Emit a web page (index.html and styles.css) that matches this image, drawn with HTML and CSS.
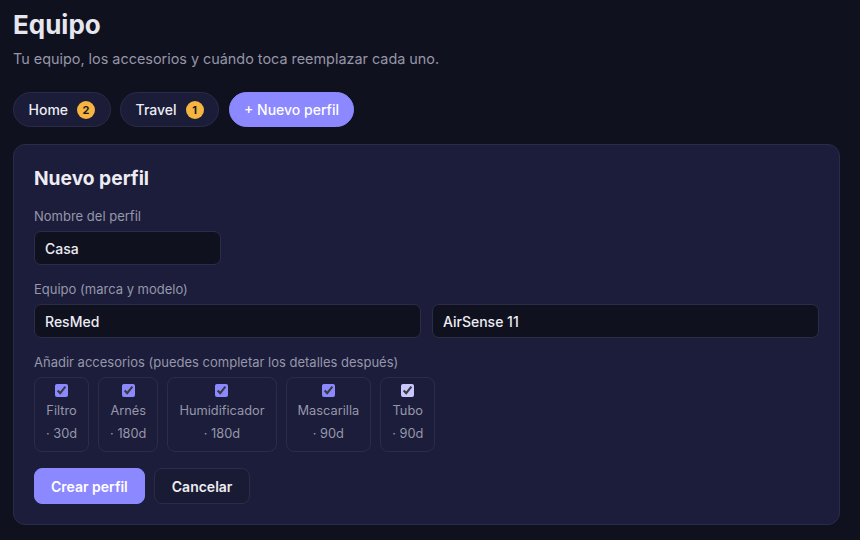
FILE: index.html
```html
<!doctype html>
<html lang="es">
  <head>
    <meta charset="UTF-8" />
    <meta name="viewport" content="width=device-width, initial-scale=1.0" />
    <title>Equipo</title>
    <link rel="stylesheet" href="styles.css">
  </head>
  <body>
    <main class="page">
      <h1 class="title">Equipo</h1>
      <p class="subtitle">Tu equipo, los accesorios y cuándo toca reemplazar cada uno.</p>

      <div class="tabs">
        <button class="tab">Home <span class="badge">2</span></button>
        <button class="tab">Travel <span class="badge">1</span></button>
        <button class="tab tab-new">+ Nuevo perfil</button>
      </div>

      <section class="card">
        <h2 class="card-title">Nuevo perfil</h2>

        <div class="field">
          <label class="label">Nombre del perfil</label>
          <input class="input input-name" type="text" value="Casa" />
        </div>

        <div class="field">
          <label class="label">Equipo (marca y modelo)</label>
          <div class="row">
            <input class="input" type="text" value="ResMed" />
            <input class="input" type="text" value="AirSense 11" />
          </div>
        </div>

        <div class="field">
          <label class="label">Añadir accesorios (puedes completar los detalles después)</label>
          <div class="chips">
            <label class="chip"><input type="checkbox" checked /><span>Filtro</span><span>· 30d</span></label>
            <label class="chip"><input type="checkbox" checked /><span>Arnés</span><span>· 180d</span></label>
            <label class="chip"><input type="checkbox" checked /><span>Humidificador</span><span>· 180d</span></label>
            <label class="chip"><input type="checkbox" checked /><span>Mascarilla</span><span>· 90d</span></label>
            <label class="chip chip-hover"><input type="checkbox" checked /><span>Tubo</span><span>· 90d</span></label>
          </div>
        </div>

        <div class="actions">
          <button class="btn btn-primary">Crear perfil</button>
          <button class="btn btn-ghost">Cancelar</button>
        </div>
      </section>
    </main>
  </body>
</html>
```

FILE: styles.css
```css
html,
body {
  margin: 0;
  background: #10111f;
}

body {
  font-family: Inter, "Noto Sans", sans-serif;
  color: #e8e8f0;
}

.page {
  padding: 9px 20px 16px 13px;
}

.title {
  margin: 0;
  font-size: 26px;
  line-height: 32px;
  font-weight: 700;
  color: #e6e6ee;
}

.subtitle {
  margin: 8px 0 0;
  font-size: 14.4px;
  line-height: 20px;
  color: #9596a7;
}

/* --- tabs --- */
.tabs {
  display: flex;
  gap: 9.5px;
  margin-top: 23px;
}

.tab {
  display: inline-flex;
  align-items: center;
  gap: 9px;
  height: 35px;
  padding: 0 14.5px;
  font-family: inherit;
  font-size: 14px;
  font-weight: 500;
  color: #ececf4;
  background: #1b1c37;
  border: 1px solid #2a2b47;
  border-radius: 18px;
}

.badge {
  display: inline-flex;
  align-items: center;
  justify-content: center;
  width: 18px;
  height: 18px;
  border-radius: 50%;
  background: #f6b440;
  color: #1a1a22;
  font-size: 11px;
  font-weight: 700;
}

.tab-new {
  background: #8c88ff;
  border-color: #8c88ff;
  color: #ffffff;
}

/* --- card --- */
.card {
  margin-top: 17px;
  padding: 20px;
  background: #1c1d3a;
  border: 1px solid #2a2b48;
  border-radius: 12px;
}

.card-title {
  margin: 0 0 16px;
  font-size: 19.2px;
  line-height: 26px;
  font-weight: 700;
  color: #ececf2;
}

.field {
  margin-bottom: 15px;
}

.label {
  display: block;
  margin-bottom: 6px;
  font-size: 13px;
  line-height: 18px;
  color: #9697aa;
}

.input {
  box-sizing: border-box;
  height: 34px;
  padding: 0 10px;
  font-family: inherit;
  font-size: 14px;
  font-weight: 500;
  color: #ececf2;
  background: #10111f;
  border: 1px solid #2b2c48;
  border-radius: 7px;
  outline: none;
}

.input-name {
  width: 187px;
}

.row {
  display: grid;
  grid-template-columns: 1fr 1fr;
  gap: 11px;
}

.row .input {
  width: 100%;
}

/* --- accessory chips --- */
.chips {
  display: flex;
  gap: 9px;
  margin-bottom: 16px;
}

.chip {
  display: flex;
  flex-direction: column;
  align-items: center;
  gap: 5px;
  padding: 6px 11px 8px;
  font-size: 12.8px;
  line-height: 18px;
  color: #9697aa;
  border: 1px solid #2b2c48;
  border-radius: 8px;
}

.chip input {
  margin: 0;
  width: 13px;
  height: 13px;
  accent-color: #8c88ff;
}

.chip-hover input {
  accent-color: #c9c7ff;
}

/* --- buttons --- */
.actions {
  display: flex;
  gap: 9px;
}

.btn {
  height: 36px;
  padding: 0 16px;
  font-family: inherit;
  font-size: 14px;
  font-weight: 600;
  border-radius: 8px;
}

.btn-primary {
  background: #8c88ff;
  border: 1px solid #8c88ff;
  color: #ffffff;
}

.btn-ghost {
  padding: 0 17px;
  background: #191a33;
  border: 1px solid #2b2c48;
  color: #ececf2;
}
```
